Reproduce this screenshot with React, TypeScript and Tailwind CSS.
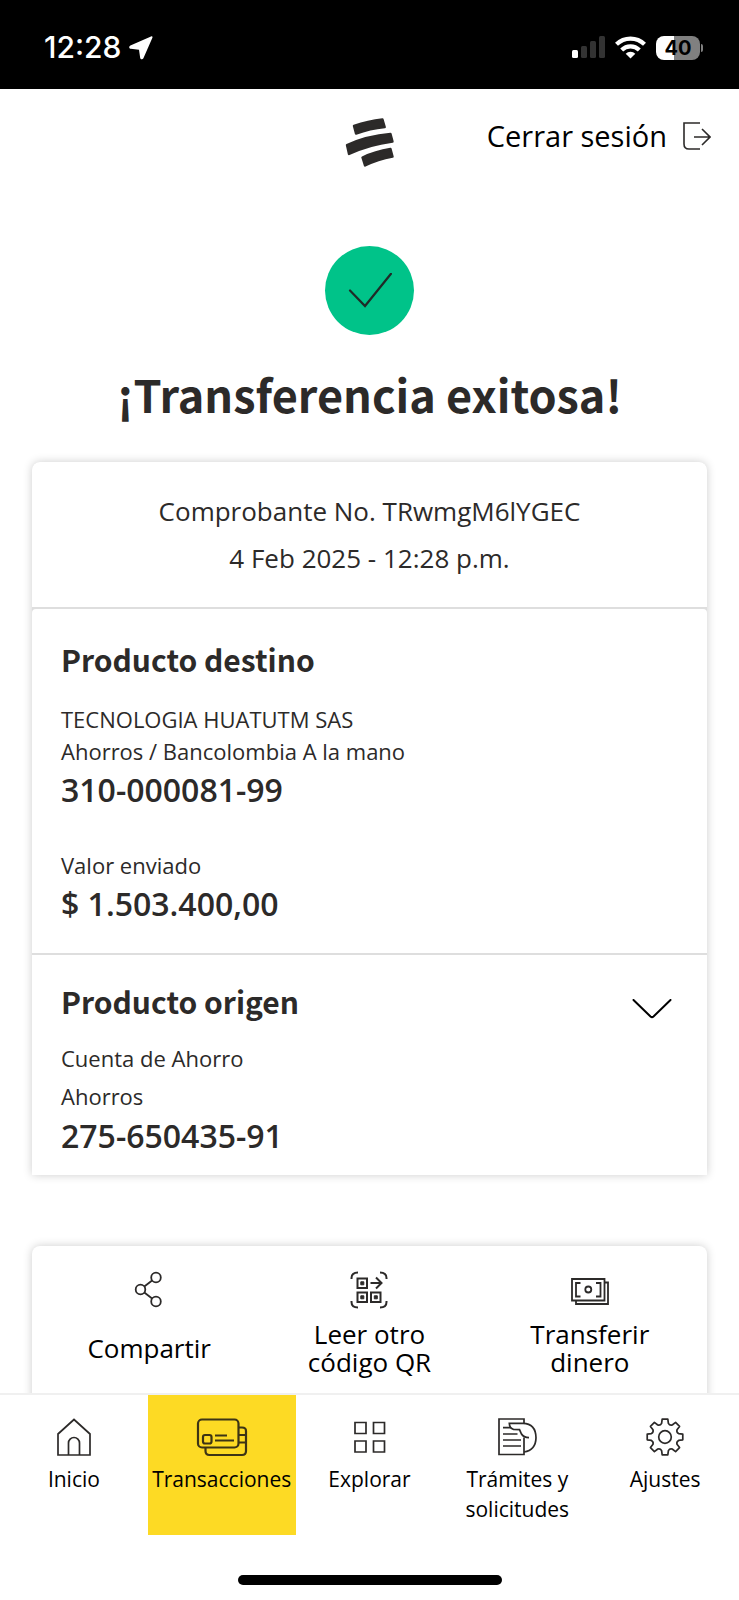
import React from "react";

/**
 * Icons
 */

function LocationIcon() {
  return (
    <svg width="24" height="24" viewBox="0 0 24 24" fill="#ffffff" aria-hidden="true">
      <path d="M22 .4c1.200-.5 1.800.3 1.400 1.300L14.400 22.300c-.8 1.600-2.900 1.300-3.200-.4l-1.200-8.100-8.200-1c-1.900-.3-2.200-2.500-.4-3.300L22 .4z" />
    </svg>
  );
}

function SignalIcon() {
  return (
    <svg width="33" height="23" viewBox="0 0 33 23" aria-hidden="true">
      <rect x="0" y="14" width="6" height="8" rx="1.500" fill="#ffffff" />
      <rect x="9" y="10" width="6" height="12" rx="1.500" fill="#333333" />
      <rect x="18" y="5" width="6" height="17" rx="1.500" fill="#333333" />
      <rect x="27" y="0" width="6" height="22" rx="1.500" fill="#333333" />
    </svg>
  );
}

function WifiIcon() {
  return (
    <svg width="31" height="23" viewBox="0 0 31 23" fill="none" stroke="#ffffff" strokeWidth="4.200" aria-hidden="true">
      <path d="M1.500 8.300a20 20 0 0 1 28 0" />
      <path d="M6.700 14a12.500 12.500 0 0 1 17.600 0" />
      <path d="M15.500 22.500l-4.800-4.800a6.900 6.900 0 0 1 9.600 0z" fill="#ffffff" stroke="none" />
    </svg>
  );
}

function LogoIcon() {
  return (
    <svg width="49" height="49" viewBox="0 0 49 49" fill="#2c2a29" stroke="#2c2a29" strokeWidth="2.400" strokeLinejoin="round" aria-hidden="true">
      <path d="M9 8Q23 3 37.500 1.500L39.700 9Q25 10.500 11 15.500z" />
      <path d="M2 27Q22 18 45.500 16L47.500 23.500Q24 26.500 4 36z" />
      <path d="M17.500 39.500Q30 33.500 45.500 31L47.500 38.500Q33 41 20 47.500z" />
    </svg>
  );
}

function LogoutIcon() {
  return (
    <svg width="28" height="28" viewBox="0 0 28 28" fill="none" stroke="#2c2a29" strokeWidth="1.600" aria-hidden="true">
      <path d="M17 1H1v21q0 5 5 5h11" />
      <path d="M11 15h16M19 7l8 8-8 8" />
    </svg>
  );
}

function CheckIcon() {
  return (
    <svg width="44" height="36" viewBox="0 0 44 36" fill="none" stroke="#1f2b27" strokeWidth="2.200" strokeLinecap="round" aria-hidden="true">
      <path d="M2 17.500L17 33 43 .8" />
    </svg>
  );
}

function ChevronIcon() {
  return (
    <svg width="40" height="20" viewBox="0 0 40 20" fill="none" stroke="#000000" strokeWidth="2" strokeLinecap="round" aria-hidden="true">
      <path d="M1.500 1l17 16.500q1.500 1.300 3 0L38.500 1" />
    </svg>
  );
}

function ShareIcon() {
  return (
    <svg width="38" height="38" viewBox="0 0 38 38" fill="none" stroke="#2c2a29" strokeWidth="1.800" aria-hidden="true">
      <circle cx="10.500" cy="18.500" r="4.800" />
      <circle cx="26" cy="6.500" r="4.800" />
      <circle cx="26" cy="30.500" r="4.800" />
      <path d="M14.300 15.500l7.800-6M14.300 21.500l7.800 6" />
    </svg>
  );
}

function QrIcon() {
  return (
    <svg width="38" height="38" viewBox="0 0 38 38" fill="none" stroke="#2c2a29" strokeWidth="2" aria-hidden="true">
      <path d="M1.500 8V7q0-5.500 6.500-5.500M30 1.500q6.500 0 6.500 5.500v1M1.500 30v1q0 5.500 6.500 5.500M30 36.500q6.500 0 6.500-5.500v-1" />
      <path d="M7.500 7.500h9.500v9.500H7.500zM7.500 21.500h9.500V31H7.500zM21 21.500h9.500V31H21z" />
      <path d="M20.500 12h11M26 6.500l5.500 5.500-5.500 5.500" />
      <path d="M10.800 10.800h3v3h-3zM10.800 24.800h3v3h-3zM24.300 24.800h3v3h-3z" fill="#2c2a29" strokeWidth="1" />
    </svg>
  );
}

function MoneyIcon() {
  return (
    <svg width="38" height="38" viewBox="0 0 38 38" fill="none" stroke="#2c2a29" strokeWidth="1.800" aria-hidden="true">
      <path d="M1 8h32.500v21.500H1z" />
      <path d="M33.500 11.500H37V33H5v-3.500" />
      <path d="M9.500 12H5v13.500h4.500M25 12h4.500v13.500H25" />
      <circle cx="17.300" cy="18.500" r="3" />
    </svg>
  );
}

function HomeIcon() {
  return (
    <svg width="40" height="40" viewBox="0 0 40 40" fill="none" stroke="#2c2a29" strokeWidth="1.700" aria-hidden="true">
      <path d="M4 38V17L20 2.500 36 17v21z" />
      <path d="M14.500 38V26a5.500 5.500 0 0 1 11 0v12" />
    </svg>
  );
}

function CardsIcon() {
  return (
    <svg width="52" height="40" viewBox="0 0 52 40" fill="none" stroke="#3d3415" strokeWidth="2.200" aria-hidden="true">
      <rect x="2" y="2.500" width="40.500" height="28" rx="4" />
      <path d="M9.500 30.500V34q0 4 4 4H46q4 0 4-4V14q0-3.500-4-3.500h-3.500M42.500 18H50M42.500 25.500H50" />
      <rect x="7" y="18" width="8.500" height="8.500" rx="2" />
      <path d="M19 18.500h12M19 23.500h19" />
    </svg>
  );
}

function GridIcon() {
  return (
    <svg width="40" height="40" viewBox="0 0 40 40" fill="none" stroke="#2c2a29" strokeWidth="1.700" aria-hidden="true">
      <path d="M6 5.500h11v11H6zM24.500 5.500h11v11h-11zM6 24h11v11H6zM24.500 24h11v11h-11z" />
    </svg>
  );
}

function DocumentIcon() {
  return (
    <svg width="42" height="40" viewBox="0 0 42 40" fill="none" stroke="#2c2a29" strokeWidth="1.700" aria-hidden="true">
      <path d="M28 6.300V2H3v35.500h25V20.500" />
      <path d="M33 20.700q-5.500-.2-7.500-3.700l-2-4.400-6-.3q-4-.8-4.200-6H27Q39.800 6.500 40 20.700 39.800 33 28 35" />
      <path d="M7 10.700h8M7 17h14.500M7 23h18M7 29h18" />
    </svg>
  );
}

function gearPoint(radius: number, degrees: number): string {
  const angle = (degrees * Math.PI) / 180;
  return `${(20 + radius * Math.sin(angle)).toFixed(2)} ${(20 - radius * Math.cos(angle)).toFixed(2)}`;
}

const gearPath = [0, 45, 90, 135, 180, 225, 270, 315]
  .map((a, i) => {
    const start = i === 0 ? `M${gearPoint(14, a - 14)}` : "";
    return `${start}L${gearPoint(18, a - 9)}L${gearPoint(18, a + 9)}L${gearPoint(14, a + 14)}Q${gearPoint(12.2, a + 22.5)} ${gearPoint(14, a + 31)}`;
  })
  .join("") + "Z";

function GearIcon() {
  return (
    <svg width="40" height="40" viewBox="0 0 40 40" fill="none" stroke="#2c2a29" strokeWidth="1.700" strokeLinejoin="round" aria-hidden="true">
      <circle cx="20" cy="20" r="6.300" />
      <path d={gearPath} />
    </svg>
  );
}

/**
 * Data
 */

const actions = [
  { label: "Compartir", icon: <ShareIcon /> },
  { label: "Leer otro código QR", icon: <QrIcon /> },
  { label: "Transferir dinero", icon: <MoneyIcon /> },
];

const tabs = [
  { label: "Inicio", icon: <HomeIcon />, active: false },
  { label: "Transacciones", icon: <CardsIcon />, active: true },
  { label: "Explorar", icon: <GridIcon />, active: false },
  { label: "Trámites y solicitudes", icon: <DocumentIcon />, active: false },
  { label: "Ajustes", icon: <GearIcon />, active: false },
];

/**
 * Sections
 */

function StatusBar() {
  return (
    <div className="flex h-[89px] shrink-0 items-center justify-between bg-black pt-[6px] pr-9 pl-11 text-white">
      <div className="flex items-center gap-2 font-['Inter',sans-serif] text-[30px] font-medium">
        <span>12:28</span>
        <LocationIcon />
      </div>
      <div className="flex items-center gap-[10px]">
        <SignalIcon />
        <WifiIcon />
        <div className="flex items-center gap-px">
          <div className="flex h-6 w-11 items-center justify-center rounded-lg bg-linear-to-r from-white from-40% to-[#808080] to-40% font-['Inter',sans-serif] text-xl font-bold text-black">
            40
          </div>
          <div className="h-2 w-[2px] rounded-r-full bg-[#808080]" />
        </div>
      </div>
    </div>
  );
}

function Header() {
  return (
    <header className="grid grid-cols-[1fr_auto_1fr] px-7 pt-[29px]">
      <div />
      <LogoIcon />
      <button type="button" className="flex h-9 items-center gap-4 justify-self-end text-[29px] whitespace-nowrap text-black">
        Cerrar sesión
        <LogoutIcon />
      </button>
    </header>
  );
}

function SectionTitle({ children }: { children: React.ReactNode }) {
  return (
    <h2 className="font-['Noto_Sans_CJK_SC',sans-serif] text-[30px] leading-[44px] font-bold">{children}</h2>
  );
}

function Receipt() {
  return (
    <section className="mx-8 mt-9 flex flex-col gap-[2px] rounded-t-lg bg-[#dedede] shadow-[0_0_10px_rgba(0,0,0,0.2)]">
      <div className="rounded-t-lg bg-white pt-[26px] pb-[25px] text-center text-[26px] leading-[47px]">
        <p>Comprobante No. TRwmgM6lYGEC</p>
        <p>4 Feb 2025 - 12:28 p.m.</p>
      </div>
      <div className="rounded-t bg-white px-[29px] pt-7 pb-[26px]">
        <SectionTitle>Producto destino</SectionTitle>
        <p className="mt-[22px] text-[22px] leading-8">TECNOLOGIA HUATUTM SAS</p>
        <p className="text-[22px] leading-8">Ahorros / Bancolombia A la mano</p>
        <p className="text-[32px] leading-[46px] font-semibold">310-000081-99</p>
        <p className="mt-9 text-[22px] leading-8">Valor enviado</p>
        <p className="text-[32px] leading-[46px] font-semibold">$ 1.503.400,00</p>
      </div>
      <div className="bg-white px-[29px] pt-6 pb-[18px]">
        <div className="flex items-center justify-between pr-[6px]">
          <SectionTitle>Producto origen</SectionTitle>
          <button type="button" aria-label="Ver producto origen" className="pt-4">
            <ChevronIcon />
          </button>
        </div>
        <p className="mt-4 text-[22px] leading-[38px]">Cuenta de Ahorro</p>
        <p className="text-[22px] leading-[38px]">Ahorros</p>
        <p className="text-[32px] leading-[42px] font-semibold">275-650435-91</p>
      </div>
    </section>
  );
}

function Actions() {
  return (
    <section className="mx-8 mt-[71px] grid grid-cols-3 rounded-lg bg-white px-[7px] pt-[25px] pb-9 shadow-[0_0_10px_rgba(0,0,0,0.2)]">
      {actions.map(({ label, icon }) => (
        <button key={label} type="button" className="flex flex-col items-center gap-[11px] px-10 text-[26px] leading-7 text-black">
          {icon}
          <span className="flex min-h-14 items-center">{label}</span>
        </button>
      ))}
    </section>
  );
}

function TabBar() {
  return (
    <nav className="grid shrink-0 grid-cols-5 border-t-2 border-[#f0f0f0] bg-white">
      {tabs.map(({ label, icon, active }) => (
        <a
          key={label}
          href="#"
          aria-current={active ? "page" : undefined}
          className={`flex h-[140px] flex-col items-center gap-[7px] pt-[22px] text-center text-[21px] leading-[30px] text-black ${active ? "bg-[#fdda24]" : ""}`}>
          {icon}
          <span>{label}</span>
        </a>
      ))}
    </nav>
  );
}

export default function App() {
  return (
    <div className="flex h-screen w-full flex-col bg-white font-['Open_Sans',sans-serif] text-[#2c2a29]">
      <StatusBar />
      <main className="min-h-0 flex-1 overflow-hidden">
        <Header />
        <div className="mt-[79px] flex flex-col items-center">
          <div className="flex size-[89px] items-center justify-center rounded-full bg-[#00c389]">
            <CheckIcon />
          </div>
          <h1 className="mt-[26px] text-center font-['Noto_Sans_CJK_SC',sans-serif] text-[45px] leading-[65px] font-bold">
            ¡Transferencia exitosa!
          </h1>
        </div>
        <Receipt />
        <Actions />
      </main>
      <TabBar />
      <div className="flex h-[65px] shrink-0 items-end justify-center pb-[15px]">
        <div className="h-[10px] w-[264px] rounded-full bg-black" />
      </div>
    </div>
  );
}
